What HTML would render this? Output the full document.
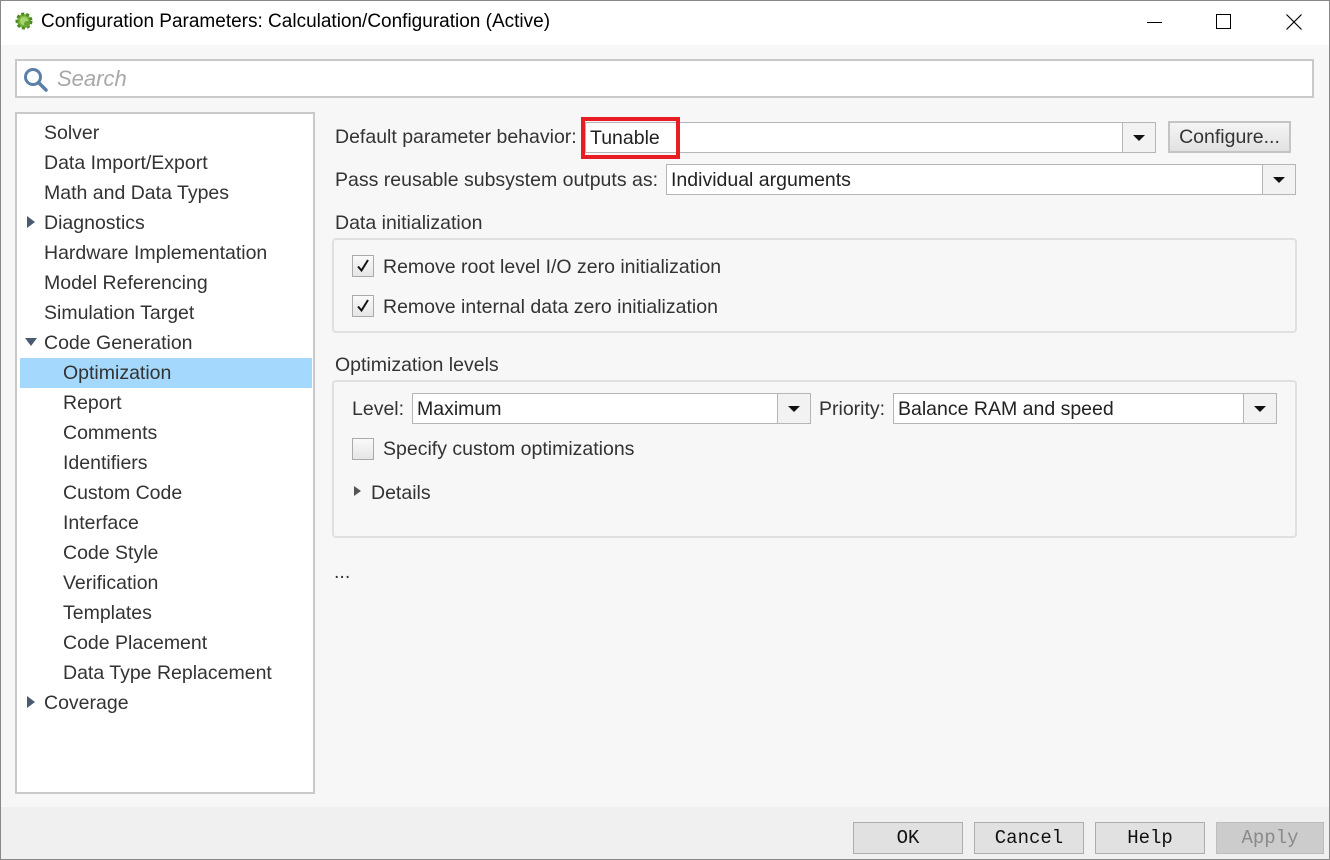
<!DOCTYPE html>
<html><head><style>
*{box-sizing:border-box;margin:0;padding:0}
body{width:1330px;height:860px;overflow:hidden;font-family:"Liberation Sans",Arial,sans-serif;background:#fff;position:relative;color:#333}
.win{position:absolute;left:0;top:0;width:1330px;height:860px}
.frame{position:absolute;left:0;top:0;width:1330px;height:860px;border:1px solid #888;pointer-events:none}
.title{position:absolute;left:0;top:0;width:1330px;height:45px;background:#fff}
.title .t{position:absolute;left:41px;top:11px;font-size:19px;color:#000}
.body{position:absolute;left:0;top:45px;width:1330px;height:762px;background:#f7f7f7}
.bottom{position:absolute;left:0;top:807px;width:1330px;height:53px;background:#f0f0f0}
.abs{position:absolute}
.search{left:15px;top:59px;width:1299px;height:39px;border:2px solid #c9c9c9;background:#fff}
.tree{left:15px;top:112px;width:300px;height:682px;border:2px solid #c9c9c9;background:#fff}
.item{position:absolute;font-size:19.5px;color:#333;height:30px;line-height:30px}
.lbl{font-size:19.5px;color:#333;position:absolute;white-space:nowrap}
.combo{position:absolute;background:#fff;border:1px solid #b5b5b5;height:31px}
.combo .v{position:absolute;left:4px;top:4px;font-size:19.5px;color:#222}
.combo .dd{position:absolute;right:0;top:0;width:33px;height:29px;border-left:1px solid #b5b5b5;background:#f2f2f2}
.combo .dd:after{content:"";position:absolute;left:10px;top:12px;border-left:6px solid transparent;border-right:6px solid transparent;border-top:6px solid #111}
.group{position:absolute;border:2px solid #e0e0e0;border-radius:4px}
.cb{position:absolute;width:22px;height:22px;border:1px solid #aaa;background:linear-gradient(#fafafa,#e6e6e6)}
.btn{position:absolute;top:822px;width:110px;height:32px;border:1px solid #adadad;background:#e1e1e1;font-family:"Liberation Mono","Noto Sans CJK SC",monospace;font-size:19px;text-align:center;line-height:30px;color:#111}
</style></head><body>
<div class="win">
<div class="title">
<svg class="abs" style="left:14px;top:11px" width="20" height="20" viewBox="0 0 20 20"><circle cx="10" cy="10" r="7" fill="#7cb342" stroke="#4d8a24" stroke-width="3" stroke-dasharray="3 2"/><circle cx="10" cy="10" r="4" fill="#a5d66a"/><circle cx="13" cy="13" r="3" fill="#6aa136"/></svg>
<div class="t">Configuration Parameters: Calculation/Configuration (Active)</div>
<div class="abs" style="left:1147px;top:22px;width:15px;height:1px;background:#000"></div>
<div class="abs" style="left:1216px;top:14px;width:15px;height:15px;border:1px solid #000"></div>
<svg class="abs" style="left:1286px;top:14px" width="16" height="16" viewBox="0 0 16 16"><path d="M0.5 0.5L15.5 15.5M15.5 0.5L0.5 15.5" stroke="#000" stroke-width="1.2"/></svg>
</div>
<div class="body"></div>
<div class="bottom"></div>
<div class="abs search">
<svg class="abs" style="left:6px;top:6px" width="26" height="26" viewBox="0 0 26 26"><circle cx="10" cy="10" r="7.5" fill="none" stroke="#5b7fa6" stroke-width="3"/><path d="M15.5 15.5L23 23" stroke="#5b7fa6" stroke-width="3.5" stroke-linecap="round"/></svg>
<div class="abs" style="left:40px;top:5px;font-size:22px;font-style:italic;color:#a8a8a8">Search</div>
</div>
<div class="abs tree">
<div class="abs" style="left:3px;top:244px;width:292px;height:30px;background:#a5d8fd"></div>
<div class="item" style="left:27px;top:4px">Solver</div>
<div class="item" style="left:27px;top:34px">Data Import/Export</div>
<div class="item" style="left:27px;top:64px">Math and Data Types</div>
<div class="abs" style="left:10px;top:102px;border-top:6px solid transparent;border-bottom:6px solid transparent;border-left:8px solid #4a5a70"></div>
<div class="item" style="left:27px;top:94px">Diagnostics</div>
<div class="item" style="left:27px;top:124px">Hardware Implementation</div>
<div class="item" style="left:27px;top:154px">Model Referencing</div>
<div class="item" style="left:27px;top:184px">Simulation Target</div>
<div class="abs" style="left:8px;top:224px;border-left:6px solid transparent;border-right:6px solid transparent;border-top:8px solid #4a5a70"></div>
<div class="item" style="left:27px;top:214px">Code Generation</div>
<div class="item" style="left:46px;top:244px">Optimization</div>
<div class="item" style="left:46px;top:274px">Report</div>
<div class="item" style="left:46px;top:304px">Comments</div>
<div class="item" style="left:46px;top:334px">Identifiers</div>
<div class="item" style="left:46px;top:364px">Custom Code</div>
<div class="item" style="left:46px;top:394px">Interface</div>
<div class="item" style="left:46px;top:424px">Code Style</div>
<div class="item" style="left:46px;top:454px">Verification</div>
<div class="item" style="left:46px;top:484px">Templates</div>
<div class="item" style="left:46px;top:514px">Code Placement</div>
<div class="item" style="left:46px;top:544px">Data Type Replacement</div>
<div class="abs" style="left:10px;top:582px;border-top:6px solid transparent;border-bottom:6px solid transparent;border-left:8px solid #4a5a70"></div>
<div class="item" style="left:27px;top:574px">Coverage</div>
</div>

<div class="lbl" style="left:335px;top:126px">Default parameter behavior:</div>
<div class="combo" style="left:585px;top:122px;width:571px"><div class="v">Tunable</div><div class="dd"></div></div>
<div class="abs" style="left:581px;top:117px;width:99px;height:42px;border:4px solid #e81c24"></div>
<div class="abs" style="left:1168px;top:121px;width:123px;height:32px;border:2px solid #c4c4c4;background:linear-gradient(#f4f4f4,#e2e2e2);font-size:19.5px;text-align:center;line-height:28px;color:#333">Configure...</div>
<div class="lbl" style="left:335px;top:169px">Pass reusable subsystem outputs as:</div>
<div class="combo" style="left:666px;top:164px;width:630px"><div class="v">Individual arguments</div><div class="dd"></div></div>

<div class="lbl" style="left:335px;top:212px">Data initialization</div>
<div class="group" style="left:332px;top:238px;width:965px;height:95px"></div>
<div class="cb" style="left:352px;top:255px"></div>
<svg class="abs" style="left:352px;top:255px" width="22" height="22" viewBox="0 0 22 22"><path d="M6 11.5L9.5 15.5L16 5" fill="none" stroke="#111" stroke-width="2"/></svg>
<div class="lbl" style="left:383px;top:256px">Remove root level I/O zero initialization</div>
<div class="cb" style="left:352px;top:295px"></div>
<svg class="abs" style="left:352px;top:295px" width="22" height="22" viewBox="0 0 22 22"><path d="M6 11.5L9.5 15.5L16 5" fill="none" stroke="#111" stroke-width="2"/></svg>
<div class="lbl" style="left:383px;top:296px">Remove internal data zero initialization</div>

<div class="lbl" style="left:335px;top:354px">Optimization levels</div>
<div class="group" style="left:332px;top:380px;width:965px;height:158px"></div>
<div class="lbl" style="left:352px;top:398px">Level:</div>
<div class="combo" style="left:412px;top:393px;width:399px"><div class="v">Maximum</div><div class="dd"></div></div>
<div class="lbl" style="left:819px;top:398px">Priority:</div>
<div class="combo" style="left:893px;top:393px;width:384px"><div class="v">Balance RAM and speed</div><div class="dd"></div></div>
<div class="cb" style="left:352px;top:438px"></div>
<div class="lbl" style="left:383px;top:438px">Specify custom optimizations</div>
<div class="abs" style="left:354px;top:486px;border-top:5px solid transparent;border-bottom:5px solid transparent;border-left:7px solid #555"></div>
<div class="lbl" style="left:371px;top:482px">Details</div>
<div class="lbl" style="left:334px;top:561px">...</div>

<div class="btn" style="left:853px">OK</div>
<div class="btn" style="left:974px">Cancel</div>
<div class="btn" style="left:1095px">Help</div>
<div class="btn" style="left:1216px;width:108px;background:#cccccc;border-color:#bdbdbd;color:#8a8a8a">Apply</div>
</div>
<div class="frame"></div>
</body></html>
